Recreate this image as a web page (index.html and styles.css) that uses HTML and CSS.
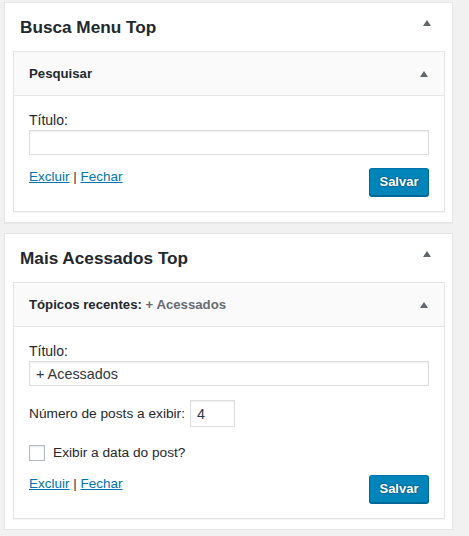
FILE: index.html
```html
<!DOCTYPE html>
<html lang="pt-BR">
<head>
<meta charset="utf-8">
<title>Widgets</title>
<link rel="stylesheet" href="styles.css">
</head>
<body>
<div class="page">
  <section class="sidebar">
    <div class="sidebar-head">
      <h2 class="sidebar-title">Busca Menu Top</h2>
      <span class="arrow arrow-top"></span>
    </div>
    <div class="widget">
      <div class="widget-top">
        <h3 class="widget-title">Pesquisar</h3>
        <span class="arrow arrow-inner"></span>
      </div>
      <div class="widget-inside">
        <label class="field-label">Título:</label>
        <input class="text-input" type="text" value="">
        <div class="controls">
          <div class="links"><a href="#" class="link">Excluir</a> | <a href="#" class="link">Fechar</a></div>
          <button class="save-btn" type="button">Salvar</button>
        </div>
      </div>
    </div>
  </section>

  <section class="sidebar">
    <div class="sidebar-head">
      <h2 class="sidebar-title">Mais Acessados Top</h2>
      <span class="arrow arrow-top"></span>
    </div>
    <div class="widget">
      <div class="widget-top">
        <h3 class="widget-title">Tópicos recentes: <span class="in-title">+ Acessados</span></h3>
        <span class="arrow arrow-inner"></span>
      </div>
      <div class="widget-inside">
        <label class="field-label">Título:</label>
        <input class="text-input" type="text" value="+ Acessados">
        <div class="number-row">
          <label class="row-label">Número de posts a exibir:</label>
          <input class="num-input" type="text" value="4">
        </div>
        <div class="check-row">
          <span class="checkbox"></span>
          <label class="row-label">Exibir a data do post?</label>
        </div>
        <div class="controls">
          <div class="links"><a href="#" class="link">Excluir</a> | <a href="#" class="link">Fechar</a></div>
          <button class="save-btn" type="button">Salvar</button>
        </div>
      </div>
    </div>
  </section>
</div>
</body>
</html>
```
FILE: styles.css
```css
html, body {
  margin: 0;
  padding: 0;
  background: #f1f1f1;
}
body {
  font-family: "Liberation Sans", Arial, sans-serif;
  color: #23282d;
  font-size: 14px;
}
.page {
  padding: 2px 0 0 4px;
  display: flex;
  flex-direction: column;
  gap: 10px;
}
.sidebar {
  width: 449px;
  box-sizing: border-box;
  background: #fff;
  border: 1px solid #e5e5e5;
  box-shadow: 0 1px 1px rgba(0,0,0,0.04);
  padding: 0 7px 10px 8px;
}
.sidebar-head {
  display: flex;
  justify-content: space-between;
  align-items: flex-start;
  margin: 0 -7px 0 -8px;
}
.sidebar-title {
  margin: 0;
  padding: 12px 15px;
  font-size: 17.2px;
  line-height: 24px;
  font-weight: bold;
  color: #23282d;
}
.arrow {
  width: 0;
  height: 0;
  border-left: 4px solid transparent;
  border-right: 4px solid transparent;
  border-bottom: 6px solid #60666b;
}
.arrow-top {
  margin-top: 17px;
  margin-right: 21px;
}
.widget {
  border: 1px solid #e5e5e5;
  box-shadow: 0 1px 1px rgba(0,0,0,0.04);
}
.widget-top {
  height: 43px;
  background: #fafafa;
  border-bottom: 1px solid #e5e5e5;
  display: flex;
  align-items: center;
  justify-content: space-between;
  padding: 0 16px 0 15px;
}
.widget-title {
  margin: 0;
  font-size: 13.2px;
  font-weight: bold;
  color: #23282d;
}
.in-title {
  color: #666b70;
}
.arrow-inner {
  margin-top: 1px;
}
.widget-inside {
  padding: 14px 15px 15px;
  display: flex;
  flex-direction: column;
}
.field-label {
  display: block;
  line-height: 20px;
}
.text-input {
  display: block;
  width: 100%;
  height: 25px;
  box-sizing: border-box;
  margin: 0;
  border: 1px solid #ddd;
  box-shadow: inset 0 1px 2px rgba(0,0,0,0.07);
  padding: 0 6px;
  font-family: "Liberation Sans", Arial, sans-serif;
  font-size: 14.4px;
  color: #32373c;
  outline: none;
}
.number-row {
  display: flex;
  align-items: center;
  gap: 5px;
  margin-top: 14px;
}
.row-label {
  line-height: 20px;
  font-size: 13.7px;
}
.num-input {
  width: 45px;
  height: 27px;
  box-sizing: border-box;
  margin: 0;
  border: 1px solid #ddd;
  box-shadow: inset 0 1px 2px rgba(0,0,0,0.07);
  padding: 0 6px;
  font-family: "Liberation Sans", Arial, sans-serif;
  font-size: 14.4px;
  color: #32373c;
  outline: none;
}
.check-row {
  display: flex;
  align-items: center;
  gap: 8px;
  margin-top: 18px;
  height: 16px;
}
.checkbox {
  width: 16px;
  height: 16px;
  box-sizing: border-box;
  border: 1px solid #b4b9be;
  background: #fff;
  box-shadow: inset 0 1px 2px rgba(0,0,0,0.1);
}
.controls {
  display: flex;
  justify-content: space-between;
  align-items: flex-start;
  margin-top: 12px;
}
.check-row + .controls {
  margin-top: 13px;
}
.links {
  line-height: 20px;
  font-size: 13.5px;
  color: #32373c;
}
.link {
  color: #0073aa;
  text-decoration: underline;
}
.save-btn {
  margin-top: 1px;
  width: 60px;
  height: 28px;
  box-sizing: border-box;
  padding: 0 0 1px;
  background: #0085ba;
  border: 1px solid #0073aa;
  border-color: #0073aa #006799 #006799;
  border-radius: 3px;
  box-shadow: 0 1px 0 #006799;
  color: #fff;
  font-family: "Liberation Sans", Arial, sans-serif;
  font-size: 13px;
  font-weight: bold;
  line-height: 26px;
  text-shadow: 0 -1px 1px #006799, 1px 0 1px #006799, 0 1px 1px #006799, -1px 0 1px #006799;
}
```
